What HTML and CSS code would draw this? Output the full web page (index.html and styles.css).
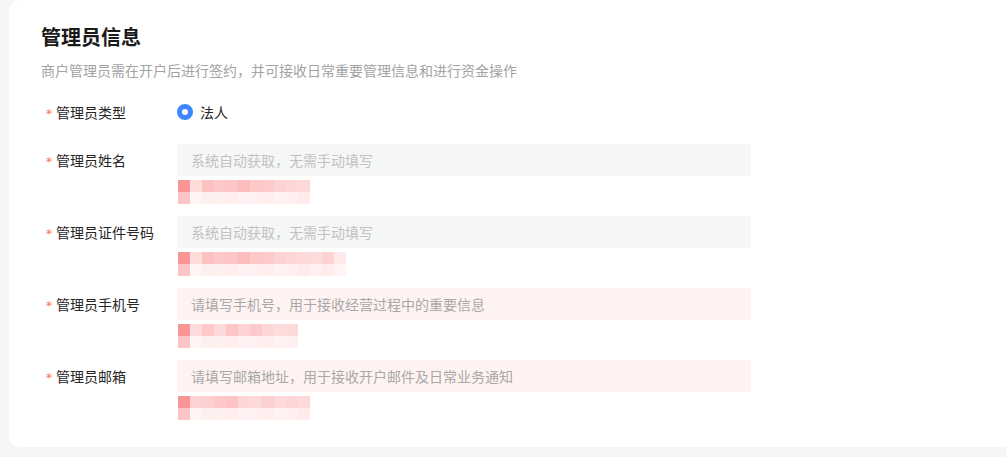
FILE: index.html
```html
<!DOCTYPE html>
<html lang="zh-CN">
<head>
<meta charset="utf-8">
<title>管理员信息</title>
<link rel="stylesheet" href="styles.css">
</head>
<body>
<div class="card">
  <h2 class="title">管理员信息</h2>
  <p class="subtitle">商户管理员需在开户后进行签约，并可接收日常重要管理信息和进行资金操作</p>

  <div class="row row-radio">
    <div class="label"><span class="req">*</span>管理员类型</div>
    <div class="control radio-wrap">
      <span class="radio"></span><span class="radio-text">法人</span>
    </div>
  </div>

  <div class="row">
    <div class="label"><span class="req">*</span>管理员姓名</div>
    <div class="control">
      <div class="input disabled">系统自动获取，无需手动填写</div>
      <div class="mosaic m1"><div class="mr a"></div><div class="mr b"></div></div>
    </div>
  </div>

  <div class="row">
    <div class="label"><span class="req">*</span>管理员证件号码</div>
    <div class="control">
      <div class="input disabled">系统自动获取，无需手动填写</div>
      <div class="mosaic m2"><div class="mr a"></div><div class="mr b"></div></div>
    </div>
  </div>

  <div class="row">
    <div class="label"><span class="req">*</span>管理员手机号</div>
    <div class="control">
      <div class="input error">请填写手机号，用于接收经营过程中的重要信息</div>
      <div class="mosaic m3"><div class="mr a"></div><div class="mr b"></div></div>
    </div>
  </div>

  <div class="row last">
    <div class="label"><span class="req">*</span>管理员邮箱</div>
    <div class="control">
      <div class="input error">请填写邮箱地址，用于接收开户邮件及日常业务通知</div>
      <div class="mosaic m4"><div class="mr a"></div><div class="mr b"></div></div>
    </div>
  </div>
</div>
</body>
</html>
```

FILE: styles.css
```css
html, body {
  margin: 0;
  padding: 0;
  background: #f5f6f8;
  overflow: hidden;
  font-family: "Noto Sans CJK SC", "Noto Sans", sans-serif;
}

.card {
  background: #ffffff;
  margin: 0 -30px 0 9px;
  height: 447px;
  box-sizing: border-box;
  border-radius: 10px;
  padding: 23px 32px 0 32px;
}

.title {
  margin: 0;
  font-size: 20px;
  line-height: 28px;
  font-weight: 700;
  color: #1a1a1a;
}

.subtitle {
  margin: 8px 0 0 0;
  font-size: 14px;
  line-height: 22px;
  color: #a3a3a3;
}

.row {
  display: flex;
  align-items: flex-start;
  margin-bottom: 12px;
}

.row-radio {
  margin-top: 15px;
  margin-bottom: 14px;
}

.label {
  width: 131px;
  padding-left: 5px;
  flex: none;
  font-size: 14px;
  line-height: 32px;
  color: #262626;
}

.req {
  color: #f76a4a;
  margin-right: 4px;
  font-family: "DejaVu Sans", sans-serif;
  font-size: 12px;
}

.control {
  display: flex;
  flex-direction: column;
}

.radio-wrap {
  flex-direction: row;
  align-items: center;
  height: 32px;
}

.radio {
  width: 16px;
  height: 16px;
  box-sizing: border-box;
  border-radius: 50%;
  border: 5px solid #3d86ff;
  background: #fff;
}

.radio-text {
  margin-left: 7px;
  font-size: 14px;
  color: #262626;
}

.input {
  width: 574px;
  height: 32px;
  box-sizing: border-box;
  border-radius: 3px;
  padding-left: 14px;
  font-size: 14px;
  line-height: 32px;
  color: #c2c2c2;
}

.input.disabled {
  background: #f5f6f6;
}

.input.error {
  background: #fff3f2;
  color: #a8a8a8;
}

.mosaic {
  margin-top: 4px;
  margin-left: 1px;
  display: flex;
  flex-direction: column;
}

.mr {
  height: 12px;
}

.m1 .a, .m4 .a { width: 132px; }
.m1 .b, .m4 .b { width: 132px; }
.m2 .a, .m2 .b { width: 168px; }
.m3 .a, .m3 .b { width: 120px; }

.mr.a {
  background: linear-gradient(to right,
    #fa9595 0 12px, #fedcdc 12px 24px, #fcc0c0 24px 36px, #fcc8c8 36px 48px,
    #fcc6c6 48px 60px, #fbbcbc 60px 72px, #fcc9c9 72px 84px, #fccaca 84px 96px,
    #fdd2d2 96px 108px, #fdd6d6 108px 120px, #fddada 120px 132px,
    #fddcdc 132px 144px, #fcd2d2 144px 156px, #fde9e9 156px 168px);
}

.mr.b {
  background: linear-gradient(to right,
    #fcc4c4 0 12px, #fff4f4 12px 24px, #feefef 24px 36px, #fff0f0 36px 48px,
    #feeeee 48px 60px, #fff2f2 60px 72px, #fff1f1 72px 84px, #feeeee 84px 96px,
    #fff2f2 96px 108px, #fef0f0 108px 120px, #fdeaea 120px 132px,
    #fff1f1 132px 144px, #feeded 144px 156px, #fff3f3 156px 168px);
}

.m3 .a {
  background: linear-gradient(to right,
    #fa9595 0 12px, #fedcdc 12px 24px, #fcc8c8 24px 36px, #fddada 36px 48px,
    #fcc6c6 48px 60px, #fdd3d3 60px 72px, #fccaca 72px 84px, #fdd6d6 84px 96px,
    #fddcdc 96px 108px, #fddada 108px 120px);
}

.m4 .a {
  background: linear-gradient(to right,
    #fa9595 0 12px, #fdd2d2 12px 24px, #fdd0d0 24px 36px, #fcc8c8 36px 48px,
    #fcc4c4 48px 60px, #fdd6d6 60px 72px, #fddada 72px 84px, #fcd0d0 84px 96px,
    #fdd9d9 96px 108px, #fcd6d6 108px 120px, #fddada 120px 132px);
}
```
